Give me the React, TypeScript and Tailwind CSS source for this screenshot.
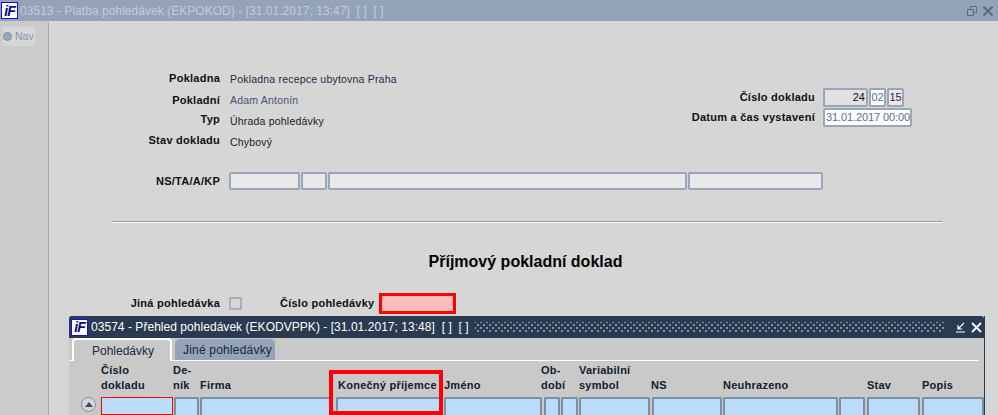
const sans = "font-['Liberation_Sans',Arial,sans-serif]";
const label = "text-right font-bold text-[#101010] tracking-[0.25px] whitespace-nowrap";

function Logo() {
  return (
    <div className="w-[17px] h-[17px] shrink-0 bg-white border border-[#1010e0] flex items-center justify-center overflow-hidden">
      <span className="text-[14px] leading-none font-bold italic text-[#0c0c80] tracking-[-1px]">iF</span>
    </div>
  );
}

function Field({ className = "" }: { className?: string }) {
  return <div className={`h-[18px] border-2 border-[#98a6b8] rounded-[2px] bg-[#e9e9e9] ${className}`} />;
}

function InfoRow({ name, value, className = "", valueClass = "" }: { name: string; value: string; className?: string; valueClass?: string }) {
  return (
    <div className={`flex items-start ${className}`}>
      <span className={`w-[171px] ${label}`}>{name}</span>
      <span className={`ml-[10px] text-[10.5px] tracking-[0.2px] whitespace-nowrap ${valueClass}`}>{value}</span>
    </div>
  );
}

function GridCell({ className = "" }: { className?: string }) {
  return <div className={`h-[18px] shrink-0 border-2 border-b-0 border-[#7f8ea3] rounded-t-[2px] bg-[#bcdcfb] ${className}`} />;
}

function Header({ top, bottom, className = "" }: { top?: string; bottom: string; className?: string }) {
  return (
    <div className={`shrink-0 flex flex-col justify-end leading-[15px] tracking-[0.25px] whitespace-nowrap ${className}`}>
      {top && <span>{top}</span>}
      <span>{bottom}</span>
    </div>
  );
}

export default function App() {
  return (
    <div className={`relative w-[998px] h-[415px] overflow-hidden bg-[#d6d6d6] text-[11px] ${sans}`}>
      {/* parent window title */}
      <div className="h-[21px] bg-[#94a3b8] flex items-center pl-[1px] pr-[5px]">
        <Logo />
        <span className="ml-[2px] text-[12px] tracking-[0.04px] text-[#c3ccd8] whitespace-pre">03513 - Platba pohledávek (EKPOKOD) - [31.01.2017; 13:47]  [ ]  [ ]</span>
        <div className="ml-auto flex items-center gap-[6px] text-[#5d6a7c]">
          <svg width="10" height="10" viewBox="0 0 10 10" fill="none" stroke="currentColor" strokeWidth="1">
            <path d="M3.5 2.5V.5h6v6H7M.5 3.5h6v6h-6z" />
          </svg>
          <svg width="10" height="10" viewBox="0 0 10 10" stroke="currentColor" strokeWidth="2">
            <path d="M.5.5l9 9M9.5.5l-9 9" />
          </svg>
        </div>
      </div>

      <div className="flex h-[394px]">
        {/* nav strip */}
        <div className="w-[49px] shrink-0 bg-[#cbcbcb] border-r border-[#98a6b8] rounded-tr-[3px] pt-[6px] pl-[3px]">
          <div className="w-[32px] h-[19px] bg-[#d6d6d6] flex items-center gap-[3px] text-[#8a98ab] text-[10.5px]">
            <div className="w-[9px] h-[9px] rounded-full border border-[#7f8ea3] bg-[#9aa7b8] shrink-0" />
            Nav
          </div>
        </div>

        <div className="flex-1">
          {/* document header */}
          <div className="flex pt-[50px]">
            <div className="w-[606px] shrink-0 leading-[14px]">
              <InfoRow name="Pokladna" value="Pokladna recepce ubytovna Praha" className="text-[#1c2c44]" valueClass="mt-[1px]" />
              <InfoRow name="Pokladní" value="Adam Antonín" className="mt-[7px] text-[#44546c]" />
              <InfoRow name="Typ" value="Úhrada pohledávky" className="mt-[5px] text-[#1a1a1a]" valueClass="mt-[2px]" />
              <InfoRow name="Stav dokladu" value="Chybový" className="mt-[5px] text-[#1a1a1a]" valueClass="mt-[2px]" />
            </div>
            <div className="mt-[17px] w-[320px] flex flex-col gap-[1px]">
              <div className="flex items-center h-[19px]">
                <span className={`w-[160px] ${label}`}>Číslo dokladu</span>
                <div className="ml-[8px] w-[45px] h-[19px] border-2 border-[#98a6b8] rounded-[2px] bg-[#e2e2e2] text-right pr-[1px] leading-[15px] text-[#101010]">24</div>
                <div className="ml-[1px] w-[17px] h-[19px] border-2 border-[#98a6b8] rounded-[2px] bg-white text-center text-[#5a6f90] leading-[15px]">02</div>
                <div className="ml-[1px] w-[17px] h-[19px] border-2 border-[#98a6b8] rounded-[2px] bg-[#e9e9e9] text-center text-[#401040] leading-[15px]">15</div>
              </div>
              <div className="flex items-center h-[19px]">
                <span className={`w-[160px] ${label}`}>Datum a čas vystavení</span>
                <div className="ml-[8px] w-[89px] h-[19px] shrink-0 border-2 border-[#98a6b8] rounded-[2px] bg-white pl-[1px] tracking-[-0.1px] text-[#5a6f90] leading-[15px] whitespace-nowrap overflow-hidden">31.01.2017 00:00</div>
              </div>
            </div>
          </div>

          {/* NS/TA/A/KP */}
          <div className="flex items-center mt-[23px]">
            <span className={`w-[171px] ${label}`}>NS/TA/A/KP</span>
            <div className="ml-[9px] flex gap-[1px]">
              <Field className="w-[71px]" />
              <Field className="w-[26px]" />
              <Field className="w-[359px]" />
              <Field className="w-[135px]" />
            </div>
          </div>

          <div className="ml-[63px] mt-[31px] w-[830px] h-[2px] bg-[#9c9c9c] border-b border-white" />

          <h1 className="mt-[29px] ml-[4px] text-center text-[16px] leading-[20px] font-bold text-black">Příjmový pokladní doklad</h1>

          {/* receivable selection */}
          <div className="flex items-center mt-[21px]">
            <span className={`w-[171px] ${label}`}>Jiná pohledávka</span>
            <div className="ml-[9px] w-[13px] h-[13px] border-2 border-[#a6b0bf] bg-[#d6d6d6]" />
            <span className={`ml-[38px] w-[94px] ${label}`}>Číslo pohledávky</span>
            <div className="ml-[5px] w-[77px] h-[21px] border-[3px] border-[#ff0000] bg-[#ffbcbc]" />
          </div>
        </div>
      </div>

      {/* child window over the form */}
      <div className="absolute left-[69px] top-[316px] w-[916px] h-[99px] bg-[#c9c9c9] border-r border-[#2a3a50]">
        <div className="h-[22px] bg-[#2a3a50] rounded-t-[3px] flex items-center pl-[2px] pr-[2px]">
          <Logo />
          <span className="ml-[3px] text-[12px] tracking-[0.04px] text-white whitespace-pre">03574 - Přehled pohledávek (EKODVPPK) - [31.01.2017; 13:48]  [ ]  [ ]</span>
          <div className="ml-[6px] flex-1 h-[11px] bg-[radial-gradient(#8d99aa_0.7px,transparent_0.8px),radial-gradient(#8d99aa_0.7px,transparent_0.8px)] bg-[length:6px_6px] bg-[position:0_0,3px_3px]" />
          <div className="ml-[11px] flex items-center gap-[5px] text-white">
            <svg width="11" height="11" viewBox="0 0 11 11" fill="none" stroke="currentColor" strokeWidth="1.2">
              <path d="M9 1L3 7M3 3v4h4M1 10h9" />
            </svg>
            <svg width="11" height="11" viewBox="0 0 11 11" stroke="currentColor" strokeWidth="1.8">
              <path d="M1 1l9 9M10 1l-9 9" />
            </svg>
          </div>
        </div>

        {/* tabs */}
        <div className="flex h-[23px] pl-[3px] border-b border-white mr-[5px]">
          <div className="w-[100px] h-[23px] shrink-0 bg-[#c9c9c9] border-l-2 border-t-2 border-r-2 border-white rounded-t-[4px] pl-[18px] text-[12px] text-[#1a2a40] leading-[22px]">Pohledávky</div>
          <div className="ml-[3px] w-[100px] h-[21px] mt-[1px] bg-[#94a3b8] rounded-t-[5px] pl-[8px] text-[12px] tracking-[0.2px] text-[#16263c] leading-[23px]">Jiné pohledávky</div>
        </div>

        {/* block headers */}
        <div className="flex h-[32px] pl-[32px] font-bold text-[#102030]">
          <Header top="Číslo" bottom="dokladu" className="w-[72px]" />
          <Header top="De-" bottom="ník" className="w-[27px]" />
          <Header bottom="Firma" className="w-[138px]" />
          <Header bottom="Konečný příjemce" className="w-[106px]" />
          <Header bottom="Jméno" className="w-[97px]" />
          <Header top="Ob-" bottom="dobí" className="w-[38px]" />
          <Header top="Variabilní" bottom="symbol" className="w-[72px]" />
          <Header bottom="NS" className="w-[72px]" />
          <Header bottom="Neuhrazeno" className="w-[144px]" />
          <Header bottom="Stav" className="w-[55px]" />
          <Header bottom="Popis" className="w-[55px]" />
        </div>

        {/* first record */}
        <div className="flex items-start mt-[4px] pl-[12px]">
          <div className="w-[15px] h-[15px] mr-[5px] rounded-full border border-[#7f8ea3] bg-[#d6d6d6] flex items-center justify-center">
            <div className="w-0 h-0 border-x-[4px] border-x-transparent border-b-[5px] border-b-[#3a4a60]" />
          </div>
          <div className="w-[72px] h-[18px] shrink-0 border border-[#ff0000] bg-[#bcdcfb]" />
          <GridCell className="w-[25px] ml-[1px]" />
          <GridCell className="w-[132px] ml-[1px]" />
          <GridCell className="w-[106px] ml-[4px]" />
          <GridCell className="w-[98px] ml-[2px]" />
          <GridCell className="w-[16px] ml-[2px]" />
          <GridCell className="w-[17px] ml-[1px]" />
          <GridCell className="w-[71px] ml-[1px]" />
          <GridCell className="w-[70px] ml-[2px]" />
          <GridCell className="w-[115px] ml-[1px]" />
          <GridCell className="w-[26px] ml-[1px]" />
          <GridCell className="w-[53px] ml-[2px]" />
          <GridCell className="w-[62px] ml-[2px]" />
        </div>

        {/* highlight round the receiver column */}
        <div className="absolute left-[260px] top-[54px] w-[114px] h-[45px] border-[4px] border-[#ff0000]" />
      </div>
    </div>
  );
}
